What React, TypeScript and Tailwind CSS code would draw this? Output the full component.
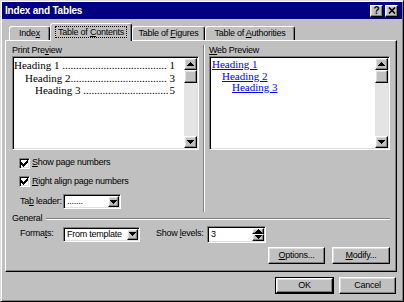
import type { ReactNode } from "react";

const sunken =
  "border border-t-[#808080] border-l-[#808080] border-b-white border-r-white shadow-[inset_1px_1px_0_#000,inset_-1px_-1px_0_#dfdfdf]";
const raised =
  "border border-t-white border-l-white border-b-black border-r-black shadow-[inset_-1px_-1px_0_#808080,inset_1px_1px_0_#dfdfdf]";

const U = ({ children }: { children: ReactNode }) => (
  <span className="underline underline-offset-[1px]">{children}</span>
);

const ArrowUp = () => (
  <svg width="7" height="4" viewBox="0 0 7 4" shapeRendering="crispEdges">
    <path d="M3 0h1v1h1v1h1v1h1v1H0V3h1V2h1V1h1z" fill="#000" />
  </svg>
);

const ArrowDown = () => (
  <svg width="7" height="4" viewBox="0 0 7 4" shapeRendering="crispEdges">
    <path d="M0 0h7v1H6v1H5v1H4v1H3V3H2V2H1V1H0z" fill="#000" />
  </svg>
);

const Check = () => (
  <svg width="7" height="7" viewBox="0 0 7 7" shapeRendering="crispEdges">
    <path
      d="M6 0h1v3H6v1H5v1H4v1H3v1H2V6H1V5H0V2h1v1h1v1h1V3h1V2h1V1h1z"
      fill="#000"
    />
  </svg>
);

const Scrollbar = () => (
  <div className="w-[13px] flex flex-col bg-[#e4e4e4]">
    <div className={`h-[12px] bg-[#c0c0c0] flex items-center justify-center ${raised}`}>
      <ArrowUp />
    </div>
    <div className={`h-[13px] bg-[#c0c0c0] ${raised}`} />
    <div className="flex-1" />
    <div className={`h-[12px] bg-[#c0c0c0] flex items-center justify-center ${raised}`}>
      <ArrowDown />
    </div>
  </div>
);

const TocLine = ({
  name,
  page,
  dots,
  indent,
}: {
  name: string;
  page: string;
  dots: number;
  indent: string;
}) => (
  <div className={`flex justify-between whitespace-pre ${indent}`}>
    <span>
      {name}
      {"".padEnd(dots, ".")}
    </span>
    <span>{page}</span>
  </div>
);

const CheckRow = ({ children, h }: { children: ReactNode; h: string }) => (
  <div className={`flex items-center pl-[7px] ${h}`}>
    <div className={`w-[11px] h-[11px] bg-white flex items-center justify-center ${sunken}`}>
      <Check />
    </div>
    <span className="ml-[2px]">{children}</span>
  </div>
);

const Combo = ({ w, text }: { w: string; text: string }) => (
  <div className={`${w} h-[15px] bg-white p-[1px] flex ${sunken}`}>
    <div className="flex-1 pl-[2px] leading-[11px] whitespace-nowrap">{text}</div>
    <div className={`w-[11px] bg-[#c0c0c0] flex items-center justify-center ${raised}`}>
      <ArrowDown />
    </div>
  </div>
);

const Button = ({ w, children, def }: { w: string; children: ReactNode; def?: boolean }) =>
  def ? (
    <div className={`${w} h-[17px] border border-black flex`}>
      <div className={`flex-1 bg-[#c0c0c0] flex items-center justify-center ${raised}`}>
        <span>{children}</span>
      </div>
    </div>
  ) : (
    <div className={`${w} h-[17px] bg-[#c0c0c0] flex items-center justify-center ${raised}`}>
      <span>{children}</span>
    </div>
  );

const Tab = ({ w, children, active }: { w: string; children: ReactNode; active?: boolean }) =>
  active ? (
    <div
      className={`${w} h-[18px] -mb-[1px] relative z-10 bg-[#c0c0c0] border-t border-l border-r border-t-white border-l-white border-r-black shadow-[inset_-1px_0_0_#808080] rounded-t-[3px] flex items-center justify-center pb-[1px]`}
    >
      <span className="border border-dotted border-black px-[2px] leading-[10px]">{children}</span>
    </div>
  ) : (
    <div
      className={`${w} h-[14px] bg-[#c0c0c0] border-t border-l border-r border-t-white border-l-white border-r-black shadow-[inset_-1px_0_0_#808080] rounded-t-[3px] flex items-center justify-center`}
    >
      <span>{children}</span>
    </div>
  );

export default function App() {
  return (
    <div className="w-[404px] h-[302px] bg-[#c0c0c0] border border-t-[#dfdfdf] border-l-[#dfdfdf] border-r-black border-b-black shadow-[inset_1px_1px_0_#fff,inset_-1px_-1px_0_#808080] p-[1px] flex flex-col font-['Liberation_Sans',Arial,sans-serif] text-[9px] tracking-[-0.25px] text-black overflow-hidden">
      {/* title bar */}
      <div className="h-[17px] bg-[#000080] flex items-center pl-[3px] pr-[4px]">
        <span className="text-white font-bold text-[10px] tracking-[-0.2px]">Index and Tables</span>
        <div className="ml-auto flex gap-[2px]">
          <div className={`w-[13px] h-[12px] bg-[#c0c0c0] flex items-center justify-center font-bold text-[10px] leading-none ${raised}`}>
            ?
          </div>
          <div className={`w-[13px] h-[12px] bg-[#c0c0c0] flex items-center justify-center ${raised}`}>
            <svg width="8" height="7" viewBox="0 0 8 7">
              <path d="M1 0.5l6 6M7 0.5l-6 6" stroke="#000" strokeWidth="1.6" />
            </svg>
          </div>
        </div>
      </div>

      <div className="flex flex-col px-[3px]">
        {/* tabs */}
        <div className="mt-[4px] h-[17px] flex items-end pl-[4px]">
          <Tab w="w-[41px]">
            Inde<U>x</U>
          </Tab>
          <Tab w="w-[82px]" active>
            Table of <U>C</U>ontents
          </Tab>
          <Tab w="w-[73px]">
            Table of <U>F</U>igures
          </Tab>
          <Tab w="w-[90px]">
            Table of <U>A</U>uthorities
          </Tab>
        </div>

        {/* tab page */}
        <div className="w-[392px] h-[232px] border border-t-white border-l-white border-r-black border-b-black shadow-[inset_-1px_-1px_0_#808080] pt-[4px] px-[6px] flex flex-col">
          <div className="flex">
            {/* left column */}
            <div className="w-[187px] flex flex-col">
              <div className="h-[11px] leading-[10px]">
                Print Pre<U>v</U>iew
              </div>
              <div className={`h-[94px] bg-white p-[1px] flex ${sunken}`}>
                <div className="flex-1 min-w-0 pr-[9px] pt-[1px] font-['Liberation_Serif','Times_New_Roman',serif] text-[11px] leading-[12.5px] tracking-normal">
                  <TocLine name="Heading 1 " page="1" dots={38} indent="pl-0" />
                  <TocLine name="Heading 2" page="3" dots={35} indent="pl-[11px]" />
                  <TocLine name="Heading 3 " page="5" dots={31} indent="pl-[21px]" />
                </div>
                <Scrollbar />
              </div>
              <CheckRow h="mt-[4px] h-[18px]">
                <U>S</U>how page numbers
              </CheckRow>
              <CheckRow h="h-[19px]">
                <U>R</U>ight align page numbers
              </CheckRow>
              <div className="h-[21px] flex items-center pl-[8px]">
                <span className="w-[43px]">
                  Ta<U>b</U> leader:
                </span>
                <Combo w="w-[58px]" text="......." />
              </div>
            </div>

            {/* separator */}
            <div className="ml-[4px] w-[2px] border-l border-l-[#808080] border-r border-r-white" />

            {/* right column */}
            <div className="ml-[4px] w-[181px] flex flex-col">
              <div className="h-[11px] leading-[10px]">
                <U>W</U>eb Preview
              </div>
              <div className={`h-[94px] bg-white p-[1px] flex ${sunken}`}>
                <div className="flex-1 pt-[1px] font-['Liberation_Serif','Times_New_Roman',serif] text-[11px] leading-[11.5px] tracking-normal text-[#0000ff]">
                  <div className="pl-[1px] underline">Heading 1</div>
                  <div className="pl-[11px] underline">Heading 2</div>
                  <div className="pl-[21px] underline">Heading 3</div>
                </div>
                <Scrollbar />
              </div>
            </div>
          </div>

          {/* general group */}
          <div className="mt-[1px] h-[12px] flex items-center">
            <span>General</span>
            <div className="flex-1 ml-[4px] h-[2px] border-t border-t-[#808080] border-b border-b-white" />
          </div>
          <div className="mt-[1px] h-[16px] flex items-center pl-[8px]">
            <span className="w-[43px]">
              Forma<U>t</U>s:
            </span>
            <Combo w="w-[77px]" text="From template" />
            <span className="ml-[16px] w-[51px]">
              Show <U>l</U>evels:
            </span>
            <div className={`w-[59px] h-[17px] bg-white p-[1px] flex ${sunken}`}>
              <div className="flex-1 pl-[2px] leading-[13px]">3</div>
              <div className="w-[12px] flex flex-col">
                <div className={`flex-1 bg-[#c0c0c0] flex items-center justify-center ${raised}`}>
                  <ArrowUp />
                </div>
                <div className={`flex-1 bg-[#c0c0c0] flex items-center justify-center ${raised}`}>
                  <ArrowDown />
                </div>
              </div>
            </div>
          </div>
          <div className="mt-[5px] flex justify-end gap-[7px]">
            <Button w="w-[57px]">
              <U>O</U>ptions...
            </Button>
            <Button w="w-[58px]">
              <U>M</U>odify...
            </Button>
          </div>
        </div>

        {/* dialog buttons */}
        <div className="mt-[5px] flex justify-end gap-[5px] pr-[3px]">
          <Button w="w-[59px]" def>
            OK
          </Button>
          <Button w="w-[57px]">Cancel</Button>
        </div>
      </div>
    </div>
  );
}
